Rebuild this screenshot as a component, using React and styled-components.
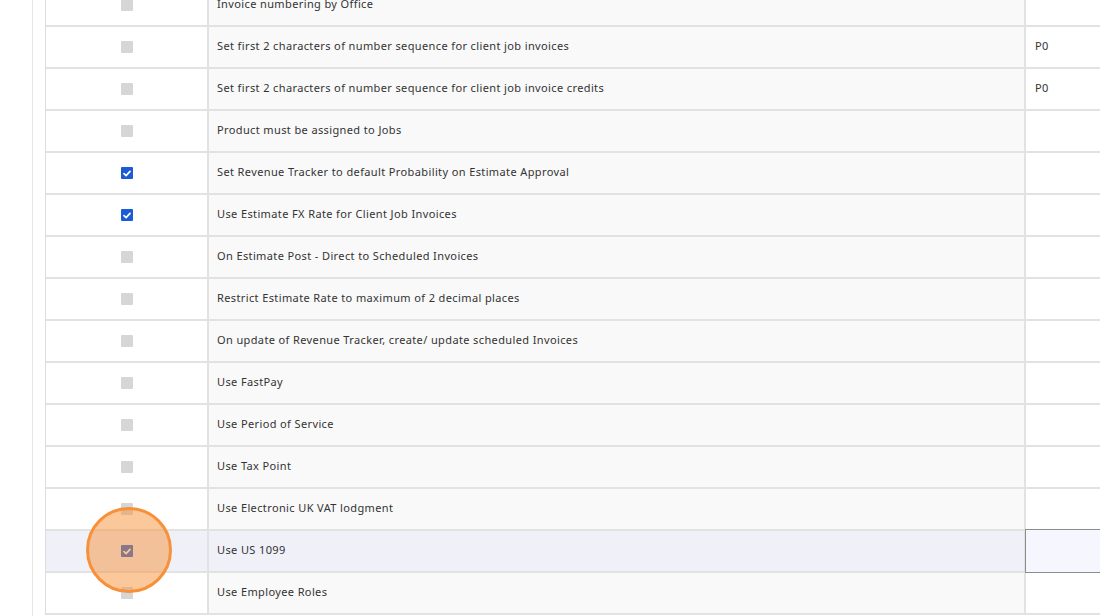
import styled, { createGlobalStyle } from "styled-components";

const GlobalStyle = createGlobalStyle`
  * {
    box-sizing: border-box;
  }

  body {
    margin: 0;
    background: #ffffff;
    color: #333333;
    font-family: "Noto Sans", "Open Sans", sans-serif;
    overflow: hidden;
  }
`;

const Page = styled.div`
  height: 616px;
  padding-left: 32px;
  overflow: hidden;
`;

const Frame = styled.div`
  height: 100%;
  border-left: 1px solid #e6e6e6;
  padding-left: 12px;
  overflow: hidden;
`;

const Table = styled.div`
  margin-top: -15px;
  border-left: 1px solid #dddddd;
`;

const Row = styled.div`
  position: relative;
  display: grid;
  grid-template-columns: 163px 817px 1fr;
  height: 42px;
  border-bottom: 2px solid #e2e2e2;
  background: ${({ active }) => (active ? "#eff0f8" : "transparent")};
`;

const CheckCell = styled.div`
  position: relative;
  display: flex;
  align-items: center;
  justify-content: center;
  border-right: 2px solid #e2e2e2;
  background: ${({ active }) => (active ? "transparent" : "#ffffff")};
`;

const LabelCell = styled.div`
  display: flex;
  align-items: center;
  padding: 0 0 3px 8px;
  border-right: 2px solid #e2e2e2;
  background: ${({ active }) => (active ? "transparent" : "#f9f9f9")};
  font-size: 11px;
  letter-spacing: 0.38px;
  color: #333333;
  white-space: nowrap;
`;

const ValueCell = styled.div`
  display: flex;
  align-items: center;
  padding: 0 0 3px 9px;
  background: #ffffff;
  font-size: 11px;
  letter-spacing: 0.3px;
  color: #333333;
`;

const ValueInput = styled.div`
  margin: -2px 0 -2px -1px;
  height: 44px;
  border: 1px solid #8c8c8c;
  border-right: none;
  background: #f6f6fe;
`;

const Box = styled.span`
  display: flex;
  align-items: center;
  justify-content: center;
  width: 12px;
  height: 12px;
  border-radius: 1px;
  background: ${({ checked }) => (checked ? "#1b5bd5" : "#d6d6d6")};
`;

const Highlight = styled.div`
  position: absolute;
  left: 40px;
  top: 50%;
  width: 86px;
  height: 86px;
  margin-top: -44px;
  border-radius: 50%;
  border: 3px solid #f6913a;
  background: rgba(247, 146, 58, 0.5);
  pointer-events: none;
  z-index: 2;
`;

function Checkbox({ checked }) {
  return (
    <Box checked={checked}>
      {checked && (
        <svg width="8" height="7" viewBox="0 0 8 7">
          <path
            d="M1 3.6 L3.1 5.6 L7 1.4"
            fill="none"
            stroke="#ffffff"
            strokeWidth="1.7"
            strokeLinecap="round"
            strokeLinejoin="round"
          />
        </svg>
      )}
    </Box>
  );
}

const SETTINGS = [
  { label: "Invoice numbering by Office" },
  {
    label: "Set first 2 characters of number sequence for client job invoices",
    value: "P0",
  },
  {
    label:
      "Set first 2 characters of number sequence for client job invoice credits",
    value: "P0",
  },
  { label: "Product must be assigned to Jobs" },
  {
    label: "Set Revenue Tracker to default Probability on Estimate Approval",
    checked: true,
  },
  { label: "Use Estimate FX Rate for Client Job Invoices", checked: true },
  { label: "On Estimate Post - Direct to Scheduled Invoices" },
  { label: "Restrict Estimate Rate to maximum of 2 decimal places" },
  { label: "On update of Revenue Tracker, create/ update scheduled Invoices" },
  { label: "Use FastPay" },
  { label: "Use Period of Service" },
  { label: "Use Tax Point" },
  { label: "Use Electronic UK VAT lodgment" },
  { label: "Use US 1099", checked: true, active: true },
  { label: "Use Employee Roles" },
];

function App() {
  return (
    <>
      <GlobalStyle />
      <Page>
        <Frame>
          <Table>
            {SETTINGS.map((item) => (
              <Row key={item.label} active={item.active}>
                <CheckCell active={item.active}>
                  <Checkbox checked={item.checked} />
                  {item.active && <Highlight />}
                </CheckCell>
                <LabelCell active={item.active}>{item.label}</LabelCell>
                {item.active ? (
                  <ValueInput />
                ) : (
                  <ValueCell>{item.value}</ValueCell>
                )}
              </Row>
            ))}
          </Table>
        </Frame>
      </Page>
    </>
  );
}

export default App;
